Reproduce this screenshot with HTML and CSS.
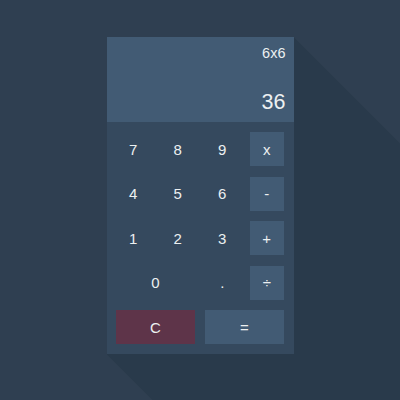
FILE: index.html
```html
<!DOCTYPE html>
<html>
<head>
<meta charset="utf-8">
<link rel="stylesheet" href="styles.css">
</head>
<body>
<div class="stage">
  <div class="calc">
    <div class="display">
      <div class="expr">6x6</div>
      <div class="result">36</div>
    </div>
    <div class="keys">
      <div class="key">7</div>
      <div class="key">8</div>
      <div class="key">9</div>
      <div class="key op">x</div>
      <div class="key">4</div>
      <div class="key">5</div>
      <div class="key">6</div>
      <div class="key op">-</div>
      <div class="key">1</div>
      <div class="key">2</div>
      <div class="key">3</div>
      <div class="key op">+</div>
      <div class="key span2">0</div>
      <div class="key">.</div>
      <div class="key op">÷</div>
      <div class="key span2 clear">C</div>
      <div class="key span2 op">=</div>
    </div>
  </div>
</div>
</body>
</html>
```
FILE: styles.css
```css
html, body {
  margin: 0;
  padding: 0;
}
body {
  background: #2f3f51;
  font-family: "Liberation Sans", Arial, sans-serif;
  color: #ecf0f1;
}
.stage {
  position: relative;
  z-index: 0;
  width: 400px;
  height: 400px;
  overflow: hidden;
  display: flex;
  justify-content: center;
  align-items: flex-start;
  padding-top: 37px;
  box-sizing: border-box;
}
.calc {
  position: relative;
  width: 187px;
  background: #35495e;
}
.calc::before {
  content: "";
  position: absolute;
  left: 0;
  top: 0;
  width: 500px;
  height: 500px;
  z-index: -1;
  background: #293a4b;
  clip-path: polygon(0 0, 187px 0, 500px 313px, 500px 500px, 183px 500px, 0 317px);
}
.display {
  height: 85px;
  background: #425b74;
  display: flex;
  flex-direction: column;
  justify-content: space-between;
  align-items: flex-end;
  padding: 8px 8px 9px;
  box-sizing: border-box;
}
.expr {
  font-size: 14.5px;
  line-height: 17px;
}
.result {
  font-size: 21.5px;
  line-height: 22px;
}
.keys {
  display: grid;
  grid-template-columns: repeat(4, 34px);
  grid-auto-rows: 34px;
  gap: 10.5px;
  padding: 10px 0;
  justify-content: center;
}
.key {
  display: flex;
  align-items: center;
  justify-content: center;
  font-size: 15px;
}
.op {
  background: #425b74;
}
.span2 {
  grid-column: span 2;
}
.clear {
  background: #5e3449;
}
```
